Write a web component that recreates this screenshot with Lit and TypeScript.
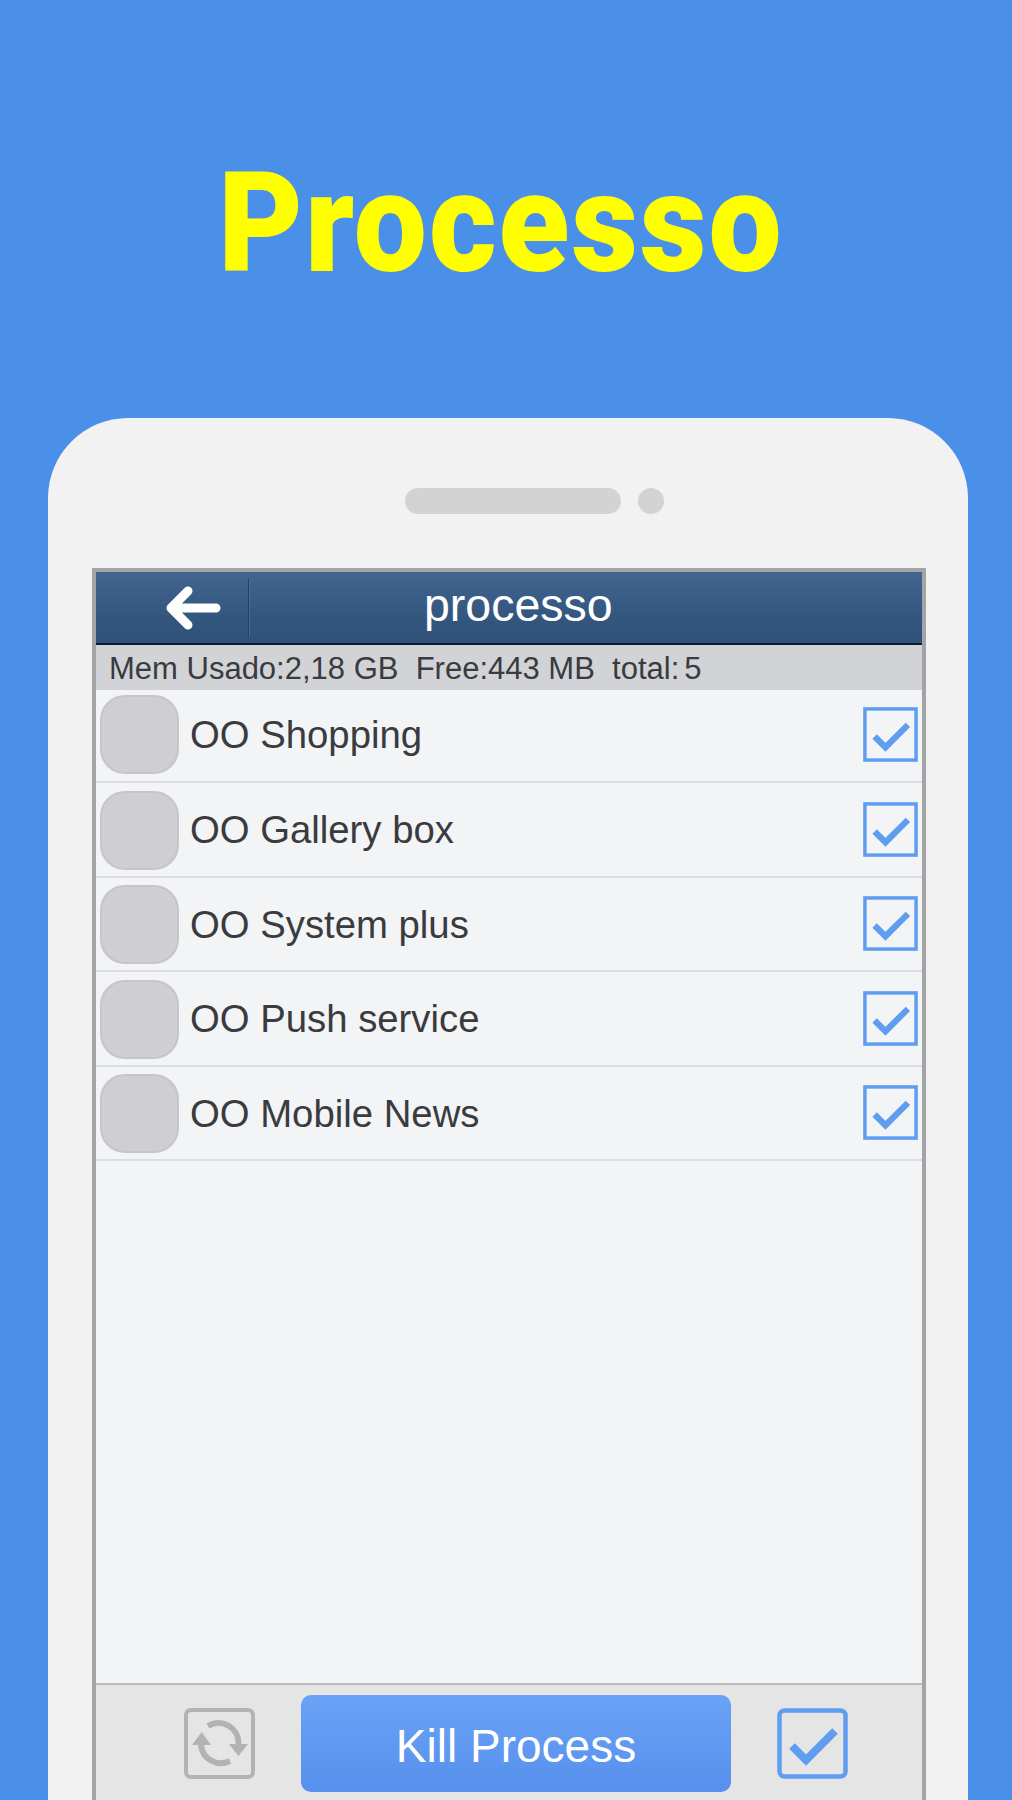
import { LitElement, html, css, svg } from "lit";
import { customElement } from "lit/decorators.js";

const ROWS = ["OO Shopping", "OO Gallery box", "OO System plus", "OO Push service", "OO Mobile News"];

const check = (cls: string, rx: number) => html`<svg class=${cls} viewBox="0 0 71 71" aria-hidden="true">
  <rect x="2.5" y="2.5" width="66" height="66" rx=${rx} fill="none" stroke="#5f9df0" stroke-width="4.5"></rect>
  <path d="M15 38 L29 52 L58 23" fill="none" stroke="#5f9df0" stroke-width="8"></path>
</svg>`;

@customElement("app-root")
export class AppRoot extends LitElement {
  static styles = css`
    :host { display: block; width: 1012px; height: 1800px; overflow: hidden; background: #4a90e9; font-family: "Liberation Sans", Arial, sans-serif; }
    .title { height: 418px; display: flex; justify-content: center; box-sizing: border-box; padding: 141px 0 0 0; }
    .title span { font-family: Roboto, "Liberation Sans", sans-serif; font-weight: 900; font-size: 140px; line-height: 164px; height: 164px; color: #ffff00; letter-spacing: 2px; margin-right: 10px; transform: scaleX(0.93); white-space: nowrap; }
    .phone { margin: 0 44px 0 48px; height: 1382px; background: #f2f2f2; border-radius: 80px 80px 0 0; display: flex; flex-direction: column; overflow: hidden; }
    .speaker { height: 150px; box-sizing: border-box; padding: 70px 0 0 357px; display: flex; gap: 17px; flex: none; }
    .speaker i { display: block; height: 26px; background: #d3d3d3; border-radius: 13px; }
    .speaker .bar { width: 216px; }
    .speaker .dot { width: 26px; }
    .screen { margin-left: 44px; width: 834px; height: 1262px; flex: none; box-sizing: border-box; border: 4px solid #a3a4a6; border-bottom: 0; display: flex; flex-direction: column; background: #f3f4f6; }
    .head { height: 73px; flex: none; box-sizing: border-box; border-bottom: 2px solid #0c1a2c; background: linear-gradient(#426590, #33567f 65%, #2f5079); display: flex; align-items: center; color: #fff; }
    .back { width: 153px; height: 58px; box-sizing: border-box; border-right: 1px solid #1f3f69; box-shadow: 1px 0 0 #4a6c96; display: flex; align-items: center; padding-left: 67px; flex: none; }
    .back svg { width: 58px; height: 48px; display: block; }
    .head h1 { margin: 0 0 6px 175px; font-size: 46.5px; font-weight: 400; line-height: 60px; color: #fff; }
    .stat { height: 45px; flex: none; background: #d2d3d6; color: #3a3b3f; font-size: 31px; line-height: 47px; padding-left: 13px; white-space: pre; box-sizing: border-box; }
    .stat b { font-weight: 400; margin-left: 5px; }
    .list { flex: 1; }
    .row { height: 94.5px; box-sizing: border-box; border-bottom: 2px solid #dcdde0; display: flex; align-items: center; padding: 0 4px; }
    .row:first-child { height: 93px; padding-bottom: 3px; }
    .ico { width: 79px; height: 79px; box-sizing: border-box; border-radius: 25px; background: #cfcfd1; border: 2px solid #c5c6c8; flex: none; margin-top: 2px; }
    .row:first-child .ico { margin-top: 0; }
    .row span { margin: 2px 0 0 11px; font-size: 38.3px; color: #3a3b3f; flex: 1; }
    .ck { width: 55px; height: 55px; display: block; flex: none; }
    .foot { height: 147px; flex: none; box-sizing: border-box; border-top: 2px solid #bcbcbc; background: #e5e5e5; display: flex; align-items: flex-start; padding: 10px 0 0 88px; }
    .tool { width: 71px; height: 71px; display: block; flex: none; margin-top: 13px; }
    .kill { width: 430px; height: 97px; margin: 0 46px; flex: none; box-sizing: border-box; border: 0; padding: 6px 0 0; border-radius: 10px; background: linear-gradient(#6aa2f7, #5790ec); color: #fff; font: 400 46px/91px "Liberation Sans", Arial, sans-serif; text-align: center; }
  `;

  render() {
    return html`
      <div class="title"><span>Processo</span></div>
      <div class="phone">
        <div class="speaker"><i class="bar"></i><i class="dot"></i></div>
        <div class="screen">
          <div class="head">
            <div class="back">
              <svg viewBox="0 0 58 48" aria-hidden="true">
                <path d="M9 24 H53 M25 7 L8 24 L25 41" fill="none" stroke="#fff" stroke-width="9" stroke-linecap="round" stroke-linejoin="round"></path>
              </svg>
            </div>
            <h1>processo</h1>
          </div>
          <div class="stat">Mem Usado:2,18 GB  Free:443 MB  total:<b>5</b></div>
          <div class="list">
            ${ROWS.map((r) => html`<div class="row"><div class="ico"></div><span>${r}</span>${check("ck", 0)}</div>`)}
          </div>
          <div class="foot">
            <svg class="tool" viewBox="0 0 71 71" aria-hidden="true">
              ${svg`<rect x="2" y="2" width="67" height="67" rx="5" fill="none" stroke="#b3b3b3" stroke-width="4"></rect>
              <path d="M24 18 A20 20 0 0 1 54.5 36 M17 37 A20 20 0 0 0 46 53" fill="none" stroke="#b3b3b3" stroke-width="6"></path>
              <path d="M17.7 24 L8 37 H27 Z M54.5 48 L45 36 H64 Z" fill="#b3b3b3"></path>`}
            </svg>
            <button class="kill">Kill Process</button>
            ${check("tool", 5)}
          </div>
        </div>
      </div>
    `;
  }
}
